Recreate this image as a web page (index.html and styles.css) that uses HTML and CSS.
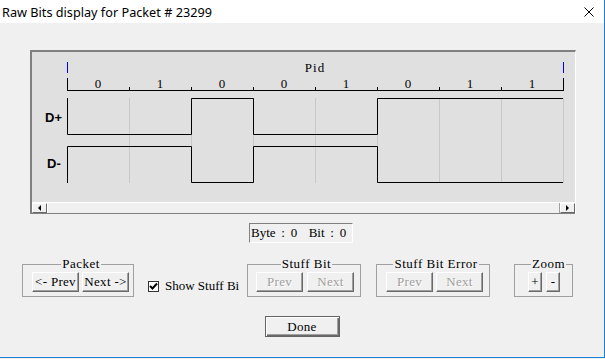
FILE: index.html
```html
<!DOCTYPE html>
<html lang="en">
<head>
    <meta charset="UTF-8">
    <title>Raw Bits display</title>
    <link rel="stylesheet" href="styles.css">
</head>
<body>
<div class="window">
    <div class="titlebar">
        <span class="title">Raw Bits display for Packet # 23299</span>
        <svg class="close" width="10" height="10" viewBox="0 0 10 10">
            <path d="M0.5 0.5 L9.5 9.5 M9.5 0.5 L0.5 9.5" stroke="#000" stroke-width="1"/>
        </svg>
    </div>

    <div class="scope">
        <!-- drawn in page coordinates -->
        <svg class="trace" width="543" height="150" viewBox="32 52 543 150">
            <g class="grid">
                <path d="M129.5 98V183 M191.5 98V183 M253.5 98V183 M315.5 98V183 M377.5 98V183 M439.5 98V183 M501.5 98V183 M563.5 98V183"/>
            </g>
            <path class="marker" d="M67.5 62V73 M563.5 62V73"/>
            <path class="axis" d="M67.5 78V91 M563.5 78V91 M67 90.5H564 M129.5 87V90 M191.5 87V90 M253.5 87V90 M315.5 87V90 M377.5 87V90 M439.5 87V90 M501.5 87V90"/>
            <text class="pid" x="315" y="72" text-anchor="middle">Pid</text>
            <g class="bits" text-anchor="middle">
                <text x="98" y="88">0</text>
                <text x="160" y="88">1</text>
                <text x="222" y="88">0</text>
                <text x="284" y="88">0</text>
                <text x="346" y="88">1</text>
                <text x="408" y="88">0</text>
                <text x="470" y="88">1</text>
                <text x="532" y="88">1</text>
            </g>
            <text class="lane" x="45" y="122">D+</text>
            <text class="lane" x="47" y="168">D-</text>
            <path class="signal" d="M67.5 98V134.5H191.5V98.5H253.5V134.5H377.5V98.5H563"/>
            <path class="signal" d="M67.5 183V146.5H191.5V182.5H253.5V146.5H377.5V182.5H563"/>
        </svg>
        <div class="hscroll">
            <span class="sb-btn sb-left"></span>
            <span class="sb-track"></span>
            <span class="sb-btn sb-right"></span>
        </div>
    </div>

    <div class="status-row">
        <div class="status">Byte : 0  Bit : 0</div>
    </div>

    <div class="controls">
        <fieldset class="group group-packet">
            <legend>Packet</legend>
            <button class="btn btn-wide">&lt;- Prev</button>
            <button class="btn btn-wide">Next -&gt;</button>
        </fieldset>
        <label class="check">
            <span class="check-box">
                <svg width="9" height="9" viewBox="0 0 9 9"><path d="M1 4 L3.5 6.5 L8 1.5" stroke="#000" stroke-width="2" fill="none"/></svg>
            </span>
            <span class="check-text">Show Stuff Bi</span>
        </label>
        <fieldset class="group group-stuff">
            <legend>Stuff Bit</legend>
            <button class="btn btn-wide" disabled>Prev</button>
            <button class="btn btn-wide" disabled>Next</button>
        </fieldset>
        <fieldset class="group group-error">
            <legend>Stuff Bit Error</legend>
            <button class="btn btn-wide" disabled>Prev</button>
            <button class="btn btn-wide" disabled>Next</button>
        </fieldset>
        <fieldset class="group group-zoom">
            <legend>Zoom</legend>
            <button class="btn btn-small">+</button>
            <button class="btn btn-small">-</button>
        </fieldset>
    </div>

    <div class="done-row">
        <button class="btn btn-done">Done</button>
    </div>
</div>
</body>
</html>
```

FILE: styles.css
```css
body {
    margin: 0;
    width: 605px;
    height: 359px;
    overflow: hidden;
    background-color: #f0f0f0;
    font-family: "Liberation Serif", "Times New Roman", serif;
    font-size: 13px;
    color: #000;
}
.window {
    box-sizing: border-box;
    width: 605px;
    height: 358px;
    border-right: 1px solid #1a7fd4;
    border-bottom: 1px solid #1a7fd4;
}
.titlebar {
    height: 23px;
    background-color: #fff;
    display: flex;
    align-items: center;
    justify-content: space-between;
    padding: 0 10px 0 2px;
}
.title {
    font-family: "Noto Sans", "Liberation Sans", sans-serif;
    font-size: 12.7px;
    color: #000;
}
.close {
    display: block;
    margin-top: 1px;
}

/* waveform panel */
.scope {
    box-sizing: border-box;
    width: 546px;
    height: 164px;
    margin: 27px 0 0 30px;
    border-top: 2px solid #808080;
    border-left: 2px solid #808080;
    border-right: 1px solid #fff;
    background-color: #e0e0e0;
    display: flex;
    flex-direction: column;
}
.trace {
    display: block;
}
.trace .grid path {
    stroke: #c8c8c8;
    stroke-width: 1;
}
.trace .axis,
.trace .signal {
    stroke: #000;
    stroke-width: 1;
    fill: none;
}
.trace .marker {
    stroke: #0000ff;
    stroke-width: 1;
}
.trace text {
    font-family: "Liberation Serif", serif;
    font-size: 13px;
    fill: #000;
}
.trace .pid {
    letter-spacing: 1px;
}
.trace .lane {
    font-family: "Liberation Sans", Arial, sans-serif;
    font-weight: bold;
    font-size: 13px;
}
.hscroll {
    box-sizing: border-box;
    height: 12px;
    display: flex;
    border-top: 1px solid #fff;
    border-bottom: 1px solid #808080;
    background-color: #f0f0f0;
}
.sb-btn {
    box-sizing: border-box;
    width: 15px;
    height: 10px;
    border: 1px solid;
    border-color: #fff #696969 #696969 #fff;
    background-color: #f0f0f0;
    display: flex;
    align-items: center;
    justify-content: center;
}
.sb-left::before {
    content: "";
    border-top: 3px solid transparent;
    border-bottom: 3px solid transparent;
    border-right: 3px solid #000;
}
.sb-right::before {
    content: "";
    border-top: 3px solid transparent;
    border-bottom: 3px solid transparent;
    border-left: 3px solid #000;
}
.sb-track {
    flex: 1;
    border-left: 1px solid #fff;
    border-right: 1px solid #a0a0a0;
}

/* byte / bit readout */
.status-row {
    margin-top: 9px;
    padding-left: 249px;
}
.status {
    box-sizing: border-box;
    width: 104px;
    height: 20px;
    line-height: 18px;
    padding-left: 1px;
    border: 1px solid;
    border-color: #808080 #fff #fff #808080;
    white-space: pre;
    word-spacing: 2.5px;
}

/* navigation groups */
.controls {
    margin-top: 15px;
    display: flex;
    align-items: flex-start;
}
.group {
    box-sizing: border-box;
    margin: 0;
    min-width: 0;
    border: 1px solid #a0a0a0;
    padding: 2px 3px 4px 9px;
    display: flex;
    gap: 3px;
}
.group legend {
    margin: 0 auto;
    padding: 0 1px;
    line-height: 12px;
    letter-spacing: 0.5px;
}
.group-packet {
    margin-left: 22px;
    width: 112px;
}
.group-stuff {
    width: 114px;
    padding-left: 8px;
    gap: 4px;
}
.group-error {
    margin-left: 15px;
    width: 114px;
    padding-left: 9px;
}
.group-zoom {
    margin-left: 24px;
    width: 59px;
    padding-left: 13px;
    gap: 4px;
}
.btn {
    box-sizing: border-box;
    height: 20px;
    padding: 0;
    margin: 0;
    background-color: #f0f0f0;
    border: 1px solid;
    border-color: #fff #696969 #696969 #fff;
    box-shadow: inset -1px -1px #a0a0a0;
    font-family: inherit;
    font-size: 13px;
    letter-spacing: 0.3px;
    color: #000;
}
.btn:disabled {
    color: #a0a0a0;
    text-shadow: 1px 1px #fff;
}
.btn-wide {
    width: 47px;
}
.btn-small {
    width: 14px;
}
.check {
    margin: 20px 0 0 14px;
    width: 99px;
    display: flex;
    align-items: center;
    gap: 6px;
    overflow: hidden;
    white-space: nowrap;
}
.check-box {
    box-sizing: border-box;
    width: 11px;
    height: 11px;
    flex: none;
    border: 1px solid #333;
    background-color: #fff;
    display: flex;
    align-items: center;
    justify-content: center;
}
.check-box svg {
    display: block;
}
.done-row {
    margin-top: 19px;
    display: flex;
    justify-content: center;
}
.btn-done {
    width: 75px;
    height: 21px;
    border-color: #646464;
    box-shadow: inset 1px 1px #fff, inset -1px -1px #696969, inset -2px -2px #a0a0a0;
}
```
